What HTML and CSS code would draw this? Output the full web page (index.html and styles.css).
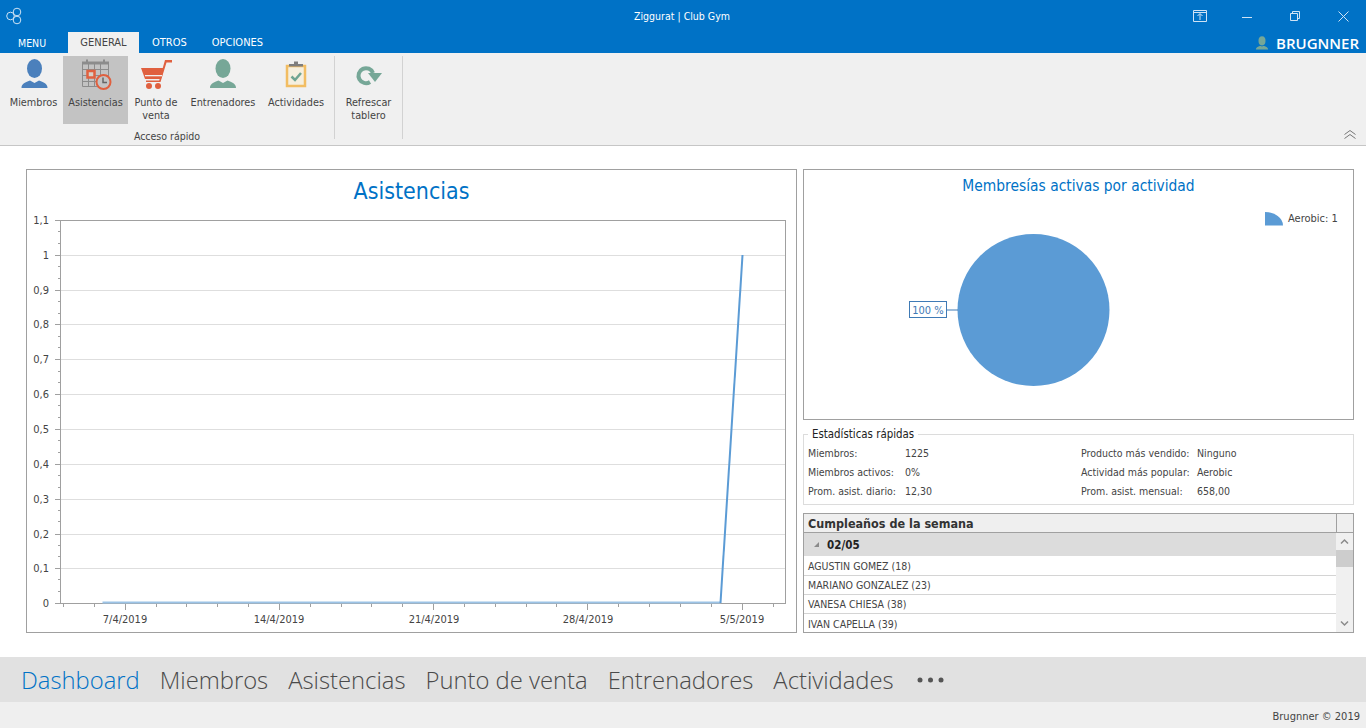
FILE: index.html
```html
<!DOCTYPE html>
<html lang="es">
<head>
    <meta charset="UTF-8">
    <meta name="viewport" content="width=device-width, initial-scale=1.0">
    <title>Ziggurat | Club Gym</title>
    <link rel="stylesheet" href="styles.css">
</head>
<body>
    <header class="titlebar">
        <svg class="logo" width="18" height="18" viewBox="0 0 18 18" fill="none" stroke="#cfe3f5" stroke-width="1">
            <circle cx="12" cy="5" r="3.800"/>
            <circle cx="5.500" cy="9" r="3.800"/>
            <circle cx="12" cy="13" r="3.800"/>
        </svg>
        <div class="app-title">Ziggurat | Club Gym</div>
        <div class="win-buttons">
            <svg class="win-pin" width="14" height="12" viewBox="0 0 14 12" fill="none" stroke="#cfe3f5"><path d="M.5.5h13v11H.5zM.5 2.500h13M7 10V4M4.500 6 7 3.500 9.500 6"/></svg>
            <svg width="10" height="10" viewBox="0 0 10 10" fill="none" stroke="#cfe3f5"><path d="M0 6.500h10"/></svg>
            <svg width="10" height="10" viewBox="0 0 10 10" fill="none" stroke="#cfe3f5"><path d="M.5 2.500h7v7h-7zM2.500 2.500v-2h7v7h-2"/></svg>
            <svg width="11" height="11" viewBox="0 0 11 11" fill="none" stroke="#cfe3f5"><path d="M.5.500l10 10M10.500.500l-10 10"/></svg>
        </div>
    </header>

    <nav class="tabs">
        <span class="tab tab-menu">MENU</span>
        <span class="tab tab-active">GENERAL</span>
        <span class="tab">OTROS</span>
        <span class="tab">OPCIONES</span>
        <div class="user">
            <svg width="14" height="14" viewBox="0 0 32 32" fill="#76a797"><ellipse cx="16" cy="11" rx="8" ry="10.500"/><path d="M2 31c0-5 4-7 10-9l4 2 4-2c6 2 10 4 10 9z"/></svg>
            <span>BRUGNNER</span>
        </div>
    </nav>

    <section class="ribbon">
        <div class="ribbon-group">
            <div class="ribbon-items">
                <div class="ribbon-btn btn-members">
                    <svg class="ribbon-icon" viewBox="0 0 32 32" fill="#4b80bc"><ellipse cx="16.500" cy="10.500" rx="7.500" ry="9.500"/><path d="M3.500 30c0-4 3-5.500 8.500-7.500l4.500 2.500 4.500-2.500c5.500 2 8.500 3.500 8.500 7.500z"/></svg>
                    <span>Miembros</span>
                </div>
                <div class="ribbon-btn btn-attendance ribbon-btn-selected">
                    <svg class="ribbon-icon" viewBox="0 0 32 32" fill="none">
                        <path d="M2.500 5.500h26v23h-26zM2.500 11.500h26M2.500 17.500h26M2.500 23.500h26M8.500 5.500v23M14.500 5.500v23M20.500 5.500v23" stroke="#8c8c8c"/>
                        <path d="M2 3.500h27v3H2z" fill="#8c8c8c"/>
                        <path d="M6 1.500h2v3H6zM23 1.500h2v3h-2z" fill="#8c8c8c"/>
                        <path d="M7.500 13h7v6.500h-7z" stroke="#e0603f" stroke-width="2.500" fill="#d8d0c8"/>
                        <circle cx="23.500" cy="24" r="7" stroke="#e0603f" stroke-width="2" fill="#c4c4c4"/>
                        <path d="M23 19.500v5h4" stroke="#666" stroke-width="1.500"/>
                    </svg>
                    <span>Asistencias</span>
                </div>
                <div class="ribbon-btn btn-sale">
                    <svg class="ribbon-icon" viewBox="0 0 32 32" fill="#e0603f">
                        <path d="M25 2h7v2.500h-5.500L20.500 24H6v-1.500h13.200z"/>
                        <path d="M1 10h23l-3 11H5z"/>
                        <path d="M5 17h17v1.300H5z" fill="#f0f0f0"/>
                        <circle cx="9" cy="28" r="3"/>
                        <circle cx="18" cy="28" r="3"/>
                    </svg>
                    <span>Punto de<br>venta</span>
                </div>
                <div class="ribbon-btn btn-trainers">
                    <svg class="ribbon-icon" viewBox="0 0 32 32" fill="#76a797"><ellipse cx="16" cy="10.500" rx="7.500" ry="9.500"/><path d="M3 30c0-4 3-5.500 8.500-7.500L16 25l4.500-2.500c5.500 2 8.500 3.500 8.500 7.500z"/></svg>
                    <span>Entrenadores</span>
                </div>
                <div class="ribbon-btn btn-activities">
                    <svg class="ribbon-icon" viewBox="0 0 32 32" fill="none">
                        <path d="M7 8h18v20H7z" fill="#f5efdf" stroke="#f2bd62" stroke-width="2.500"/>
                        <path d="M9 8.500V6h5V3.500h4V6h5v2.500z" fill="#7e7e7e"/>
                        <path d="M11.500 18.500l3.500 3.500 6-7" stroke="#6fa592" stroke-width="2.500"/>
                    </svg>
                    <span>Actividades</span>
                </div>
            </div>
            <div class="ribbon-group-label">Acceso rápido</div>
        </div>
        <div class="ribbon-group ribbon-group-small">
            <div class="ribbon-items">
                <div class="ribbon-btn">
                    <svg class="ribbon-icon" viewBox="0 0 32 32" fill="none">
                        <path d="M18 24A7.500 7.500 0 1 1 21 15" stroke="#76a797" stroke-width="4"/>
                        <path d="M16 15h14l-7 9z" fill="#76a797"/>
                    </svg>
                    <span>Refrescar<br>tablero</span>
                </div>
            </div>
        </div>
        <svg class="ribbon-collapse" width="12" height="9" viewBox="0 0 12 9" fill="none" stroke="#777"><path d="M.5 4.500 6 .5l5.500 4M.5 8.500 6 4.500l5.500 4"/></svg>
    </section>

    <main class="dashboard">
        <div class="panel chart-panel">
            <h1 class="chart-title">Asistencias</h1>
            <svg class="chart" width="769" height="422" viewBox="27 210 769 422">
                <g fill="none" shape-rendering="crispEdges">
                    <path stroke="#dedede" d="M61 255.500h724M61 290.500h724M61 324.500h724M61 359.500h724M61 394.500h724M61 429.500h724M61 464.500h724M61 499.500h724M61 534.500h724M61 568.500h724"/>
                    <path stroke="#a0a0a0" d="M60.500 220.500h725v383H60.500zM55 220.500h5M55 255.500h5M55 290.500h5M55 324.500h5M55 359.500h5M55 394.500h5M55 429.500h5M55 464.500h5M55 499.500h5M55 534.500h5M55 568.500h5M55 603.500h5"/>
                    <path stroke="#a0a0a0" d="M58 231.500h2M58 243.500h2M58 266.500h2M58 278.500h2M58 301.500h2M58 313.500h2M58 336.500h2M58 347.500h2M58 371.500h2M58 382.500h2M58 405.500h2M58 417.500h2M58 440.500h2M58 452.500h2M58 475.500h2M58 487.500h2M58 510.500h2M58 521.500h2M58 545.500h2M58 556.500h2M58 579.500h2M58 591.500h2"/>
                    <path stroke="#a0a0a0" d="M125.500 604v6M279.500 604v6M433.500 604v6M587.500 604v6M742.500 604v6"/>
                    <path stroke="#a0a0a0" d="M63.500 604v3M94.500 604v3M156.500 604v3M186.500 604v3M217.500 604v3M248.500 604v3M310.500 604v3M341.500 604v3M371.500 604v3M402.500 604v3M464.500 604v3M495.500 604v3M526.500 604v3M556.500 604v3M618.500 604v3M649.500 604v3M680.500 604v3M711.500 604v3M773.500 604v3"/>
                </g>
                <path d="M102.500 602.500H720.500" fill="none" stroke="#9cc3e6" stroke-width="2"/>
                <path d="M720.500 603L742.500 255" fill="none" stroke="#5b9bd5" stroke-width="2"/>
                <g class="axis-y" text-anchor="end">
                    <text x="49" y="224">1,1</text>
                    <text x="49" y="259">1</text>
                    <text x="49" y="294">0,9</text>
                    <text x="49" y="328">0,8</text>
                    <text x="49" y="363">0,7</text>
                    <text x="49" y="398">0,6</text>
                    <text x="49" y="433">0,5</text>
                    <text x="49" y="468">0,4</text>
                    <text x="49" y="503">0,3</text>
                    <text x="49" y="538">0,2</text>
                    <text x="49" y="572">0,1</text>
                    <text x="49" y="607">0</text>
                </g>
                <g class="axis-x" text-anchor="middle">
                    <text x="125" y="623">7/4/2019</text>
                    <text x="279" y="623">14/4/2019</text>
                    <text x="434" y="623">21/4/2019</text>
                    <text x="588" y="623">28/4/2019</text>
                    <text x="742" y="623">5/5/2019</text>
                </g>
            </svg>
        </div>

        <div class="side">
            <div class="panel pie-panel">
                <h2 class="pie-title">Membresías activas por actividad</h2>
                <svg class="chart" width="549" height="217" viewBox="804 202 549 217">
                    <circle cx="1033.500" cy="310" r="76" fill="#5b9bd5"/>
                    <path d="M946.500 310H958" stroke="#3f7ab5" fill="none"/>
                    <rect x="909.500" y="301.500" width="37" height="16" fill="#fff" stroke="#3f7ab5"/>
                    <text class="pie-label" x="928" y="313.500" text-anchor="middle">100 %</text>
                    <path d="M1265 225.500V212A18 13.500 0 0 1 1283 225.500z" fill="#5b9bd5"/>
                    <text class="pie-legend" x="1288" y="222">Aerobic: 1</text>
                </svg>
            </div>

            <fieldset class="stats">
                <legend>Estadísticas rápidas</legend>
                <div class="stats-grid">
                    <span>Miembros:</span><span>1225</span><span>Producto más vendido:</span><span>Ninguno</span>
                    <span>Miembros activos:</span><span>0%</span><span>Actividad más popular:</span><span>Aerobic</span>
                    <span>Prom. asist. diario:</span><span>12,30</span><span>Prom. asist. mensual:</span><span>658,00</span>
                </div>
            </fieldset>

            <div class="birthdays">
                <div class="birthdays-head">
                    <div class="birthdays-title">Cumpleaños de la semana</div>
                    <div class="birthdays-corner"></div>
                </div>
                <div class="birthdays-body">
                    <div class="birthdays-list">
                        <div class="group-row">
                            <svg width="7" height="7" viewBox="0 0 7 7" fill="#8a8a8a"><path d="M6 1v5H1z"/></svg>
                            <span>02/05</span>
                        </div>
                        <div class="row">AGUSTIN GOMEZ (18)</div>
                        <div class="row">MARIANO GONZALEZ (23)</div>
                        <div class="row">VANESA CHIESA (38)</div>
                        <div class="row row-last">IVAN CAPELLA (39)</div>
                    </div>
                    <div class="scrollbar">
                        <svg width="9" height="17" viewBox="0 0 9 17" fill="none" stroke="#8a8a8a" stroke-width="1.500"><path d="M1 10.500 4.500 7 8 10.500"/></svg>
                        <div class="scroll-thumb"></div>
                        <svg class="scroll-down" width="9" height="17" viewBox="0 0 9 17" fill="none" stroke="#8a8a8a" stroke-width="1.500"><path d="M1 6.500 4.500 10 8 6.500"/></svg>
                    </div>
                </div>
            </div>
        </div>
    </main>

    <nav class="bottom-nav">
        <span class="nav-item nav-active">Dashboard</span>
        <span class="nav-item">Miembros</span>
        <span class="nav-item">Asistencias</span>
        <span class="nav-item">Punto de venta</span>
        <span class="nav-item">Entrenadores</span>
        <span class="nav-item">Actividades</span>
        <svg class="nav-more" width="27" height="6" viewBox="0 0 27 6" fill="#555"><circle cx="3" cy="3" r="2.500"/><circle cx="13.500" cy="3" r="2.500"/><circle cx="24" cy="3" r="2.500"/></svg>
    </nav>

    <footer class="statusbar">Brugnner © 2019</footer>
</body>
</html>
```

FILE: styles.css
```css
* {
    box-sizing: border-box;
}

html, body {
    height: 100%;
}

body {
    margin: 0;
    display: flex;
    flex-direction: column;
    overflow: hidden;
    background: white;
    color: #444;
    font-family: "DejaVu Sans Condensed", "DejaVu Sans", sans-serif;
    font-stretch: condensed;
    font-size: 10.5px;
}

.titlebar {
    height: 32px;
    background-color: #0072c6;
    color: white;
    display: flex;
    align-items: center;
    position: relative;
}

.logo {
    margin: 0 0 0 5px;
}

.app-title {
    position: absolute;
    left: 0;
    right: 0;
    top: 10px;
    padding-right: 2px;
    text-align: center;
    font-size: 10.5px;
}

.win-buttons {
    margin-left: auto;
    display: flex;
    align-items: center;
    gap: 38px;
    padding-right: 17px;
}

.win-pin {
    margin-right: -3px;
}

.tabs {
    height: 21px;
    background-color: #0072c6;
    color: white;
    display: flex;
    font-size: 11px;
}

.tab {
    display: flex;
    align-items: center;
    padding: 0 12px 0 13px;
}

.tab-menu {
    width: 68px;
    padding: 0 0 0 18px;
    font-size: 10.5px;
}

.tab-active {
    width: 71px;
    justify-content: center;
    padding: 0;
    background-color: #f0f0f0;
    color: #444;
}

.user {
    margin-left: auto;
    display: flex;
    align-items: center;
    gap: 7px;
    padding-right: 7px;
    font-family: "Open Sans", sans-serif;
    font-stretch: normal;
    font-size: 15px;
    font-weight: 600;
}

.ribbon {
    height: 93px;
    padding: 3px 0 5px 4px;
    display: flex;
    background-color: #f0f0f0;
    border-bottom: 1px solid #c6c6c6;
    position: relative;
}

.ribbon-group {
    width: 331px;
    height: 83px;
    display: flex;
    flex-direction: column;
    border-right: 1px solid #d2d2d2;
}

.ribbon-group-small {
    width: 68px;
}

.ribbon-items {
    display: flex;
    justify-content: center;
}

.ribbon-group:first-child .ribbon-items {
    justify-content: flex-start;
}

.ribbon-btn {
    height: 68px;
    padding-top: 2px;
    display: flex;
    flex-direction: column;
    align-items: center;
    text-align: center;
    font-size: 10.8px;
    line-height: 13px;
    white-space: nowrap;
}

.btn-members {
    width: 59px;
}

.btn-attendance {
    width: 65px;
}

.btn-sale {
    width: 56px;
}

.btn-trainers {
    width: 78px;
}

.btn-activities {
    width: 68px;
}

.ribbon-btn-selected {
    background-color: #c3c3c3;
}

.ribbon-icon {
    width: 32px;
    height: 32px;
    margin-bottom: 6px;
    flex: none;
}

.ribbon-group-label {
    margin-top: 6px;
    padding-right: 4px;
    text-align: center;
    line-height: 13px;
}

.ribbon-collapse {
    position: absolute;
    right: 10px;
    bottom: 6px;
}

.dashboard {
    flex: 1;
    display: flex;
    gap: 6px;
    padding: 23px 12px 24px 26px;
    min-height: 0;
}

.panel {
    border: 1px solid #a0a0a0;
    background: white;
}

.chart-panel {
    width: 771px;
    height: 464px;
    flex: none;
}

.chart-title {
    height: 40px;
    margin: 0;
    padding-top: 6px;
    text-align: center;
    color: #0072c6;
    font-size: 23px;
    line-height: 30px;
    font-weight: normal;
}

.chart {
    display: block;
}

.chart text {
    fill: #444;
    font-size: 11px;
}

.side {
    flex: 1;
    display: flex;
    flex-direction: column;
    min-width: 0;
}

.pie-panel {
    height: 251px;
}

.pie-title {
    height: 32px;
    margin: 0;
    padding-top: 6px;
    text-align: center;
    color: #0072c6;
    font-size: 15.4px;
    line-height: 20px;
    font-weight: normal;
}

.chart .pie-label {
    fill: #3f7ab5;
}

.stats {
    margin: 7px 0 0;
    padding: 2px 4px 0;
    height: 78px;
    min-width: 0;
    border: 1px solid #dcdcdc;
}

.stats legend {
    margin-left: 0;
    padding: 0 4px;
    color: #222;
    font-size: 11.4px;
    line-height: 14px;
}

.stats-grid {
    display: grid;
    grid-template-columns: 97px 176px 116px 1fr;
    grid-auto-rows: 19px;
    align-items: center;
}

.birthdays {
    height: 120px;
    margin-top: 8px;
    border: 1px solid #a0a0a0;
    display: flex;
    flex-direction: column;
}

.birthdays-head {
    height: 19px;
    display: flex;
    flex: none;
    background-color: #efefef;
    border-bottom: 1px solid #a0a0a0;
}

.birthdays-title {
    flex: 1;
    padding: 2px 0 0 4px;
    font-size: 12.5px;
    font-weight: bold;
    color: #333;
    line-height: 16px;
}

.birthdays-corner {
    width: 17px;
    border-left: 1px solid #a0a0a0;
}

.birthdays-body {
    flex: 1;
    display: flex;
    min-height: 0;
}

.birthdays-list {
    flex: 1;
    min-width: 0;
}

.group-row {
    height: 23px;
    display: flex;
    align-items: center;
    gap: 7px;
    padding-left: 9px;
    background-color: #dcdcdc;
    font-size: 11.5px;
    font-weight: bold;
    color: #222;
}

.row {
    height: 19px;
    padding: 0 4px;
    display: flex;
    align-items: center;
    border-bottom: 1px solid #d4d4d4;
}

.group-row + .row {
    height: 20px;
    padding-top: 1px;
}

.row-last {
    border-bottom: none;
}

.scrollbar {
    width: 17px;
    display: flex;
    flex-direction: column;
    align-items: center;
    background-color: #f0f0f0;
}

.scroll-thumb {
    width: 100%;
    height: 17px;
    background-color: #cdcdcd;
}

.scroll-down {
    margin-top: auto;
}

.bottom-nav {
    height: 45px;
    flex: none;
    display: flex;
    align-items: center;
    gap: 20px;
    padding: 1px 0 0 21px;
    background-color: #e1e1e1;
    font-family: "Open Sans", sans-serif;
    font-stretch: normal;
    font-size: 23.8px;
    font-weight: 300;
    color: #4a4a4a;
}

.nav-active {
    color: #0072c6;
}

.nav-more {
    margin-left: 3px;
}

.statusbar {
    height: 26px;
    flex: none;
    padding: 8px 6px 0 0;
    text-align: right;
    background-color: #efefef;
    font-size: 11px;
    line-height: 13px;
}
```
